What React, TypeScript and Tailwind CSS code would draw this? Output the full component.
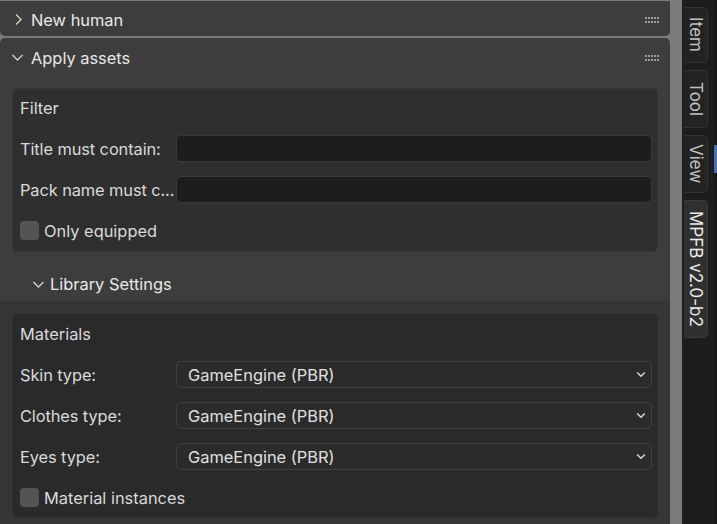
import type { ReactNode } from 'react';

function Grip() {
  const dots: ReactNode[] = [];
  for (const x of [0, 3, 6, 9, 12]) {
    for (const y of [0, 4]) {
      dots.push(<rect key={`${x}-${y}`} x={x} y={y} width="2" height="2" fill="#9c9c9c" />);
    }
  }
  return (
    <svg width="14" height="6" viewBox="0 0 14 6" className="shrink-0">
      {dots}
    </svg>
  );
}

function ChevronRight() {
  return (
    <svg width="9" height="13" viewBox="0 0 9 13" className="shrink-0">
      <polyline points="2,1.5 7,6.5 2,11.5" fill="none" stroke="#d0d0d0" strokeWidth="1.4" />
    </svg>
  );
}

function ChevronDown() {
  return (
    <svg width="13" height="9" viewBox="0 0 13 9" className="shrink-0">
      <polyline points="1.5,2 6.5,7 11.5,2" fill="none" stroke="#d0d0d0" strokeWidth="1.4" />
    </svg>
  );
}

function SmallChevron() {
  return (
    <svg width="10" height="7" viewBox="0 0 10 7" className="shrink-0">
      <polyline points="1.2,1.5 5,5.3 8.8,1.5" fill="none" stroke="#d8d8d8" strokeWidth="1.5" />
    </svg>
  );
}

function Row({ label, children }: { label: string; children?: ReactNode }) {
  return (
    <div className="flex h-[27px] items-center">
      <span className="w-[156px] shrink-0 whitespace-nowrap pt-[2px] tracking-[-0.1px] text-[#dadada]">{label}</span>
      <div className="h-full flex-1">{children}</div>
    </div>
  );
}

function TextInput() {
  return <div className="h-full rounded-[5px] border border-[#3a3a3a] bg-[#1d1d1d]" />;
}

function Dropdown({ value }: { value: string }) {
  return (
    <div className="flex h-full items-center justify-between rounded-[5px] border border-[#414141] bg-[#2b2b2b] pl-[11px] pr-[5px]">
      <span className="pt-[2px] text-[#e0e0e0]">{value}</span>
      <SmallChevron />
    </div>
  );
}

function Checkbox({ label }: { label: string }) {
  return (
    <div className="flex h-[27px] items-center gap-[5px]">
      <span className="h-[19px] w-[19px] rounded-[4px] bg-[#545454]" />
      <span className="pt-[2px] text-[#dadada]">{label}</span>
    </div>
  );
}

function Tab({ label, h, active }: { label: string; h: string; active?: boolean }) {
  return (
    <div
      className={`flex w-[24px] items-center justify-center rounded-r-[5px] border border-l-0 text-[17px] ${h} ${
        active ? 'border-[#3c3c3c] bg-[#303030] text-[#ececec]' : 'border-[#333333] bg-[#232323] text-[#c0c0c0]'
      }`}
    >
      <span className="whitespace-nowrap [writing-mode:vertical-rl]">{label}</span>
    </div>
  );
}

export default function App() {
  return (
    <div className="flex h-[524px] w-[717px] overflow-hidden bg-[#7b7b7b] font-['Inter',sans-serif] text-[16.4px]">
      <div className="flex w-[670px] flex-col gap-[2px] pt-px">
        <div className="flex h-[35px] shrink-0 items-center rounded-b-[5px] bg-[#3d3d3d] pl-[14px] pr-[11px] pt-[2px]">
          <ChevronRight />
          <span className="ml-[8px] flex-1 pt-[1px] text-[#e8e8e8]">New human</span>
          <Grip />
        </div>

        <div className="flex flex-1 flex-col overflow-hidden rounded-t-[5px] bg-[#3d3d3d]">
          <div className="flex h-[39px] shrink-0 items-center pl-[11px] pr-[11px]">
            <ChevronDown />
            <span className="ml-[7px] flex-1 pt-[2px] text-[#e8e8e8]">Apply assets</span>
            <Grip />
          </div>

          <div className="px-[12px] pt-[11px]">
            <div className="flex flex-col gap-[14px] rounded-[5px] border border-[#363636] bg-[#2f2f2f] pb-[7px] pl-[7px] pr-[5px] pt-[5px]">
              <div className="flex h-[27px] items-center pt-[2px] text-[#dadada]">Filter</div>
              <Row label="Title must contain:">
                <TextInput />
              </Row>
              <Row label="Pack name must c...">
                <TextInput />
              </Row>
              <Checkbox label="Only equipped" />
            </div>
          </div>

          <div className="mt-[10px] flex h-[39px] shrink-0 items-center pl-[32px] pt-[5px]">
            <ChevronDown />
            <span className="ml-[5px] pt-[1px] text-[#e8e8e8]">Library Settings</span>
          </div>

          <div className="flex-1 bg-[#363636] px-[12px] pt-[12px]">
            <div className="flex flex-col gap-[14px] rounded-[5px] border border-[#303030] bg-[#2a2a2a] pb-[6px] pl-[7px] pr-[5px] pt-[6px]">
              <div className="flex h-[27px] items-center pt-[2px] text-[#dadada]">Materials</div>
              <Row label="Skin type:">
                <Dropdown value="GameEngine (PBR)" />
              </Row>
              <Row label="Clothes type:">
                <Dropdown value="GameEngine (PBR)" />
              </Row>
              <Row label="Eyes type:">
                <Dropdown value="GameEngine (PBR)" />
              </Row>
              <Checkbox label="Material instances" />
            </div>
          </div>
        </div>
      </div>

      <div className="w-[12px]" />

      <div className="flex w-[32px] flex-col gap-[7px] bg-[#1d1d1d] pl-[2px] pt-[7px]">
        <Tab label="Item" h="h-[56px]" />
        <Tab label="Tool" h="h-[58px]" />
        <Tab label="View" h="h-[58px]" />
        <Tab label="MPFB v2.0-b2" h="h-[138px]" active />
      </div>

      <div className="flex w-[3px] flex-col bg-[#181818] pt-[145px]">
        <div className="h-[28px] bg-[#4772b3]" />
      </div>
    </div>
  );
}
